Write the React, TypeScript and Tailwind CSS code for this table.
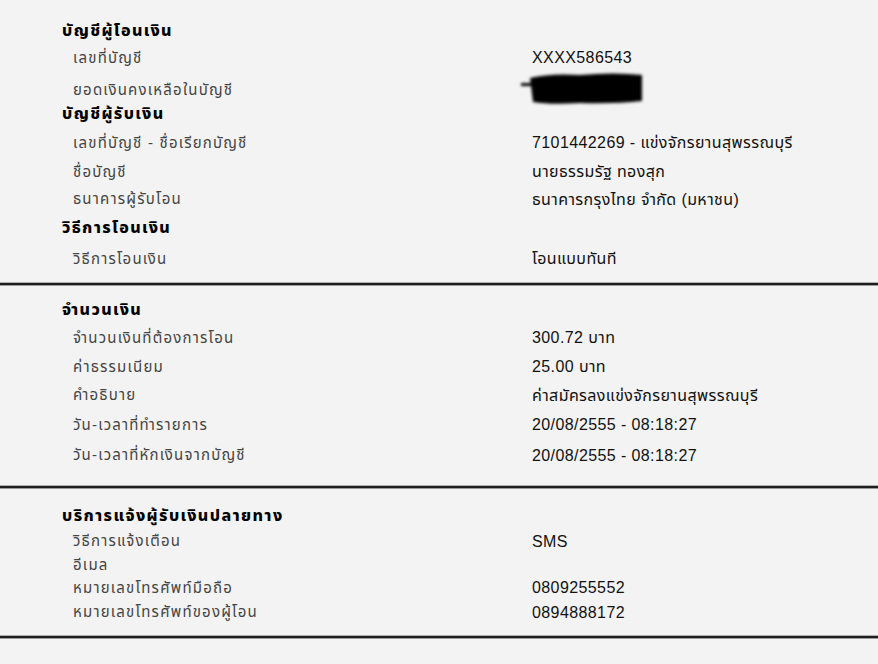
import React from 'react'

type Row = {
  label: string
  value?: React.ReactNode
  h: string
}

type Section = {
  title: string
  titleH: string
  rows: Row[]
}

function Redacted() {
  return (
    <svg width="130" height="38" viewBox="0 0 130 38" className="-ml-[14px] -mt-[2px]">
      <defs>
        <filter id="smudge" x="-10%" y="-30%" width="120%" height="160%">
          <feGaussianBlur stdDeviation="1.7" />
        </filter>
      </defs>
      <g filter="url(#smudge)" fill="#050505">
        <path d="M12 8 Q32 3 62 5 Q96 2 124 5 L124 31 Q96 34 62 33 Q32 35 15 32 Z" />
        <rect x="3" y="13" width="12" height="3" />
      </g>
    </svg>
  )
}

const GROUPS: Section[][] = [
  [
    {
      title: 'บัญชีผู้โอนเงิน',
      titleH: 'h-[26px]',
      rows: [
        { label: 'เลขที่บัญชี', value: 'XXXX586543', h: 'h-[28px]' },
        { label: 'ยอดเงินคงเหลือในบัญชี', value: <Redacted />, h: 'h-[28px]' },
      ],
    },
    {
      title: 'บัญชีผู้รับเงิน',
      titleH: 'h-[28px]',
      rows: [
        { label: 'เลขที่บัญชี - ชื่อเรียกบัญชี', value: '7101442269 - แข่งจักรยานสุพรรณบุรี', h: 'h-[30px]' },
        { label: 'ชื่อบัญชี', value: 'นายธรรมรัฐ ทองสุก', h: 'h-[28px]' },
        { label: 'ธนาคารผู้รับโอน', value: 'ธนาคารกรุงไทย จำกัด (มหาชน)', h: 'h-[27px]' },
      ],
    },
    {
      title: 'วิธีการโอนเงิน',
      titleH: 'h-[30px]',
      rows: [{ label: 'วิธีการโอนเงิน', value: 'โอนแบบทันที', h: 'h-[32px]' }],
    },
  ],
  [
    {
      title: 'จำนวนเงิน',
      titleH: 'h-[26px]',
      rows: [
        { label: 'จำนวนเงินที่ต้องการโอน', value: '300.72 บาท', h: 'h-[30px]' },
        { label: 'ค่าธรรมเนียม', value: '25.00  บาท', h: 'h-[28px]' },
        { label: 'คำอธิบาย', value: 'ค่าสมัครลงแข่งจักรยานสุพรรณบุรี', h: 'h-[29px]' },
        { label: 'วัน-เวลาที่ทำรายการ', value: '20/08/2555 - 08:18:27', h: 'h-[30px]' },
        { label: 'วัน-เวลาที่หักเงินจากบัญชี', value: '20/08/2555 - 08:18:27', h: 'h-[31px]' },
      ],
    },
  ],
  [
    {
      title: 'บริการแจ้งผู้รับเงินปลายทาง',
      titleH: 'h-[27px]',
      rows: [
        { label: 'วิธีการแจ้งเตือน', value: 'SMS', h: 'h-[25px]' },
        { label: 'อีเมล', value: '', h: 'h-[22px]' },
        { label: 'หมายเลขโทรศัพท์มือถือ', value: '0809255552', h: 'h-[24px]' },
        { label: 'หมายเลขโทรศัพท์ของผู้โอน', value: '0894888172', h: 'h-[25px]' },
      ],
    },
  ],
]

const GROUP_PAD = ['pt-[18px] pb-[8px]', 'pt-[12px] pb-[15px]', 'pt-[14px] pb-[11px]']

export default function App() {
  return (
    <div className="min-h-[664px] w-[878px] bg-[#f3f3f3] font-['Liberation_Sans','Noto_Sans_Thai','Noto_Sans',sans-serif]">
      {GROUPS.map((group, gi) => (
        <div key={gi}>
          <div className={`px-[62px] ${GROUP_PAD[gi]}`}>
            {group.map((sec) => (
              <div key={sec.title}>
                <div className={`flex items-center ${sec.titleH} text-[16px] font-extrabold tracking-[1.4px] text-black`}>
                  {sec.title}
                </div>
                {sec.rows.map((row) => (
                  <div key={row.label} className={`grid grid-cols-[470px_1fr] items-center ${row.h}`}>
                    <div className="whitespace-nowrap pl-[11px] text-[15px] tracking-[1.2px] text-[#444]">{row.label}</div>
                    <div className="whitespace-nowrap text-[16px] tracking-[0.4px] text-[#111]">{row.value}</div>
                  </div>
                ))}
              </div>
            ))}
          </div>
          <div className="h-[2px] bg-[#1e1e1e] shadow-[0_1px_0_#9a9a9a,0_-1px_0_#b0b0b0]" />
        </div>
      ))}
    </div>
  )
}
